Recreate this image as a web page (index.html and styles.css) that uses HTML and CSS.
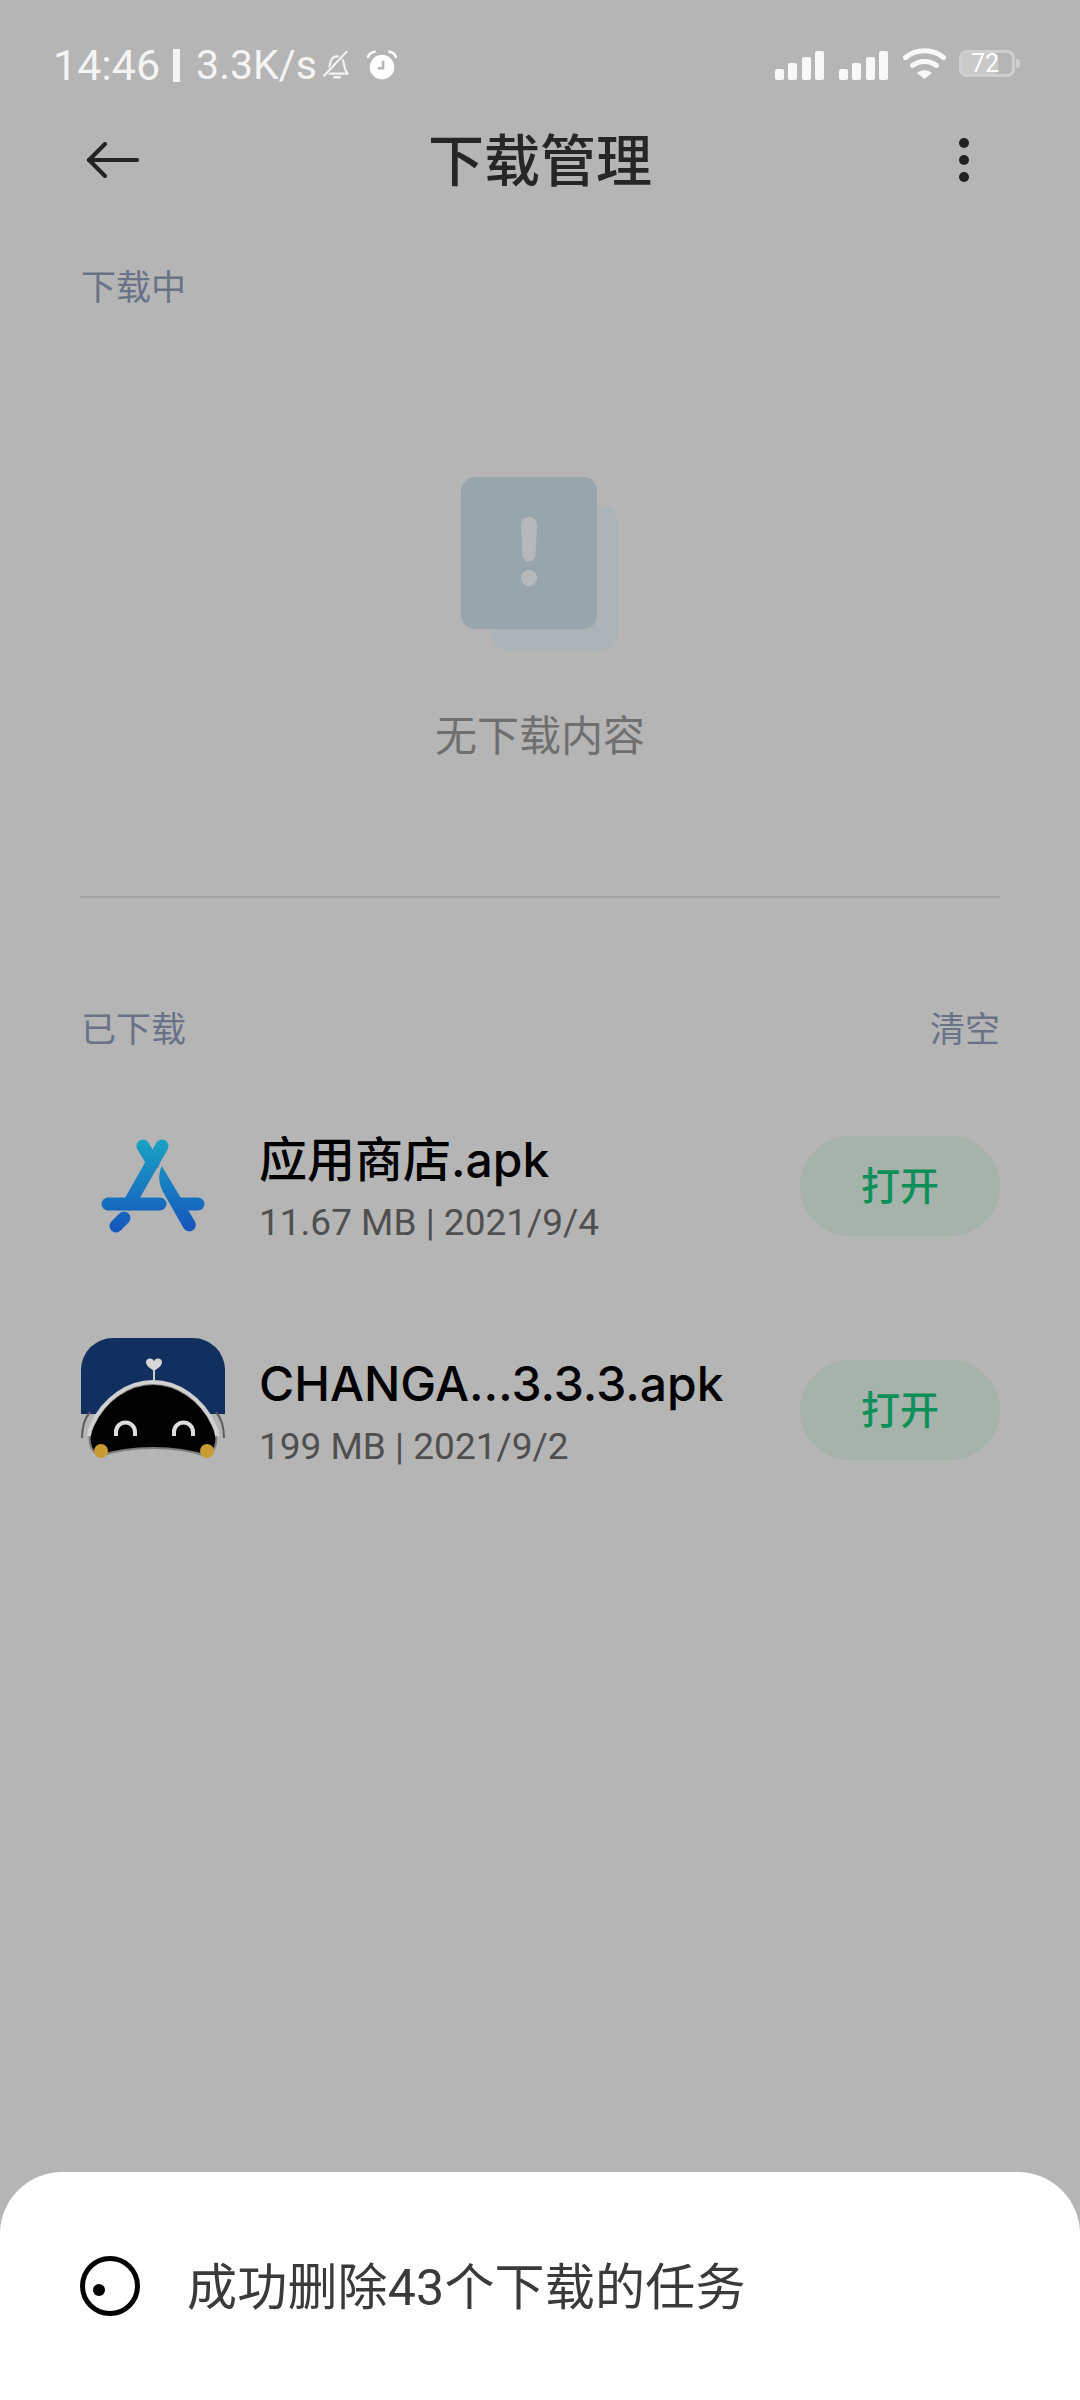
FILE: index.html
```html
<!DOCTYPE html>
<html lang="zh-CN">
<head>
    <meta charset="UTF-8">
    <meta name="viewport" content="width=device-width, initial-scale=1.0">
    <title>下载管理</title>
    <link rel="stylesheet" href="styles.css">
</head>
<body>
    <!-- Status bar -->
    <div class="status-bar">
        <div class="status-left">
            <span class="status-time">14:46</span>
            <span class="status-sep"></span>
            <span class="status-speed">3.3K/s</span>
            <svg class="icon-bell" viewBox="0 0 28 28" fill="none" stroke="#f4f4f4" stroke-width="2" stroke-linecap="round" stroke-linejoin="round">
                <path d="M4 22h20c-2.500-2.500-3-5-3.500-9-.5-4-3-7-6.500-7s-6 3-6.500 7c-.5 4-1 6.500-3.500 9z"/>
                <path d="M11.500 25.500h5" stroke-width="2.400"/>
                <path d="M23 1.500L2 24" stroke="#b5b5b5" stroke-width="4"/>
                <path d="M23 1.500L2 24"/>
            </svg>
            <svg class="icon-alarm" viewBox="0 0 30 28">
                <circle cx="15" cy="16" r="11.500" fill="#fff"/>
                <path d="M2 6.500C3 3.500 5 2 8 1.500M28 6.500C27 3.500 25 2 22 1.500" fill="none" stroke="#fff" stroke-width="2.400" stroke-linecap="round"/>
                <path d="M16 10v7h-5" fill="none" stroke="#b5b5b5" stroke-width="2.400"/>
            </svg>
        </div>
        <div class="status-right">
            <div class="signal"><i class="b1"></i><i class="b2"></i><i class="b3"></i><i class="b4"></i></div>
            <div class="signal"><i class="b1"></i><i class="b2"></i><i class="b3"></i><i class="b4"></i></div>
            <svg class="icon-wifi" viewBox="0 0 43 31" fill="none" stroke="#f8f8f8" stroke-linecap="round">
                <path d="M2.500 9.500C13 .5 30 .5 40.500 9.500" stroke-width="5"/>
                <path d="M9.500 17.500C16 12 27 12 33.500 17.500" stroke-width="5"/>
                <path d="M14 25c4-3.800 11-3.800 15 0l-7.500 6z" fill="#f8f8f8" stroke="none"/>
            </svg>
            <div class="battery">
                <div class="battery-fill"></div>
                <span class="battery-num">72</span>
            </div>
            <span class="battery-tip"></span>
        </div>
    </div>

    <!-- Header -->
    <div class="header">
        <svg class="icon-back" viewBox="0 0 53 36" fill="none" stroke="#222" stroke-width="4" stroke-linecap="round" stroke-linejoin="round">
            <path d="M51 18H3"/>
            <path d="M19 2L3 18l16 16"/>
        </svg>
        <h1 class="title">下载管理</h1>
        <div class="more"><i></i><i></i><i></i></div>
    </div>

    <!-- Downloading section -->
    <div class="section-label">下载中</div>
    <div class="empty">
        <svg class="empty-icon" viewBox="0 0 157 173">
            <rect x="30" y="29" width="127" height="144" rx="15" fill="#adb4b7"/>
            <rect x="0" y="0" width="136" height="152" rx="14" fill="#98a5ad"/>
            <path d="M60 48a8 8 0 0 1 16 0l-1.500 30a6.500 6.500 0 0 1-13 0z" fill="#b5b9bb"/>
            <circle cx="68" cy="101" r="8" fill="#b5b9bb"/>
        </svg>
        <div class="empty-text">无下载内容</div>
    </div>
    <div class="divider"></div>

    <!-- Finished section -->
    <div class="section-head">
        <div class="section-label">已下载</div>
        <div class="section-label">清空</div>
    </div>

    <div class="file-row first">
        <svg class="file-icon" viewBox="0 0 144 144">
            <defs>
                <linearGradient id="store" gradientUnits="userSpaceOnUse" x1="0" y1="25" x2="0" y2="117">
                    <stop offset="0" stop-color="#1aa3c4"/>
                    <stop offset="1" stop-color="#1655bd"/>
                </linearGradient>
            </defs>
            <g fill="none" stroke="url(#store)" stroke-width="13" stroke-linecap="round">
                <path d="M81 32L48 90"/>
                <path d="M62 32l10 17"/>
                <path d="M27 90h52"/>
                <path d="M99 90h18"/>
                <path d="M43 104l-8 8"/>
            </g>
            <path d="M80.700 52L114 107.500a6.600 6.600 0 0 1-11.500 6.500L85.500 84c-5.500-9-10.500-19-4.800-32z" fill="url(#store)"/>
        </svg>
        <div class="file-info">
            <div class="file-name">应用商店.apk</div>
            <div class="file-meta">11.67 MB | 2021/9/4</div>
        </div>
        <button class="open-btn">打开</button>
    </div>

    <div class="file-row">
        <svg class="file-icon" viewBox="0 0 144 144">
            <path d="M0 32A32 32 0 0 1 32 0h80a32 32 0 0 1 32 32v44H0z" fill="#12305f"/>
            <path d="M1 100C1 88 4 80 9 74M143 100c0-12-3-20-8-26" fill="none" stroke="#5c5c5c" stroke-width="2"/>
            <path d="M18 118C8 112 6 100 12 88 24 62 48 46 72 46s48 16 60 42c6 12 4 24-6 30-18-6-36-8-54-8s-36 2-54 8z" fill="#000" stroke="#7c7c7c" stroke-width="2"/>
            <path d="M8 98C8 94 9 91 11 87 23 60 48 44 72 44s49 16 61 43c2 4 3 7 3 11" fill="none" stroke="#d0d0d0" stroke-width="4"/>
            <path d="M35 98v-4a9.500 9.500 0 0 1 19 0v4M93 98v-4a9.500 9.500 0 0 1 19 0v4" fill="none" stroke="#ddd" stroke-width="4"/>
            <circle cx="20" cy="113" r="7" fill="#c99b34"/>
            <circle cx="126" cy="113" r="7" fill="#c99b34"/>
            <path d="M73 43V32" stroke="#ccc" stroke-width="2"/>
            <path d="M73 33c-6-4-8-6-8-9 0-4 6-5 8-1 2-4 8-3 8 1 0 3-2 5-8 9z" fill="#d6d6d6"/>
        </svg>
        <div class="file-info">
            <div class="file-name">CHANGA…3.3.3.apk</div>
            <div class="file-meta">199 MB | 2021/9/2</div>
        </div>
        <button class="open-btn">打开</button>
    </div>

    <!-- Toast -->
    <div class="toast">
        <svg class="toast-icon" viewBox="0 0 60 60" fill="none">
            <circle cx="30" cy="30" r="27.500" stroke="#000" stroke-width="5"/>
            <circle cx="19" cy="34" r="6" fill="#000"/>
        </svg>
        <span class="toast-text">成功删除43个下载的任务</span>
    </div>
</body>
</html>
```

FILE: styles.css
```css
* {
    box-sizing: border-box;
}

body {
    margin: 0;
    width: 1080px;
    height: 2400px;
    display: flex;
    flex-direction: column;
    overflow: hidden;
    background-color: #b5b5b5;
    font-family: Roboto, "Noto Sans CJK SC", sans-serif;
}

/* Status bar */
.status-bar {
    height: 100px;
    padding: 43px 60px 0 53px;
    display: flex;
    justify-content: space-between;
    align-items: flex-start;
}

.status-left {
    display: flex;
    align-items: center;
    height: 44px;
    color: #f4f4f4;
    font-size: 43px;
    line-height: 44px;
}

.status-sep {
    width: 7px;
    height: 33px;
    margin: 0 16px 0 13px;
    background-color: #f4f4f4;
}

.status-speed {
    font-size: 41px;
}

.icon-bell {
    width: 30px;
    height: 30px;
    margin-left: 5px;
}

.icon-alarm {
    width: 32px;
    height: 30px;
    margin-left: 14px;
}

.status-right {
    display: flex;
    align-items: flex-start;
    padding-top: 5px;
}

.signal {
    width: 49px;
    height: 29px;
    margin-top: 3px;
    margin-right: 15px;
    display: flex;
    align-items: flex-end;
    justify-content: space-between;
}

.signal i {
    width: 9px;
    background-color: #f8f8f8;
    border-radius: 2px;
}

.signal .b1 { height: 11px; }
.signal .b2 { height: 17px; }
.signal .b3 { height: 23px; }
.signal .b4 { height: 29px; }

.icon-wifi {
    width: 43px;
    height: 31px;
    margin-right: 13px;
}

.battery {
    position: relative;
    width: 56px;
    height: 27px;
    margin-top: 2px;
    border: 3px solid #cfcfcf;
    border-radius: 8px;
}

.battery-fill {
    width: 72%;
    height: 100%;
    margin: 0;
    background-color: #c9c9c9;
    border-radius: 4px;
}

.battery-num {
    position: absolute;
    top: -3px;
    left: 9px;
    color: #fff;
    font-size: 25px;
    line-height: 27px;
}

.battery-tip {
    width: 4px;
    height: 9px;
    margin: 11px 0 0 1px;
    background-color: #cfcfcf;
    border-radius: 0 3px 3px 0;
}

/* Header */
.header {
    height: 120px;
    padding: 0 86px;
    display: grid;
    grid-template-columns: 1fr auto 1fr;
    align-items: center;
}

.icon-back {
    width: 53px;
    height: 36px;
}

.title {
    margin: 4px 0 0;
    color: #262626;
    font-size: 56px;
    font-weight: 500;
    line-height: 70px;
}

.more {
    justify-self: end;
    margin-right: 25px;
    display: flex;
    flex-direction: column;
    gap: 7px;
}

.more i {
    width: 10px;
    height: 10px;
    background-color: #222;
    border-radius: 50%;
}

/* Sections */
.section-label {
    color: #6a7288;
    font-size: 35px;
    line-height: 50px;
}

body > .section-label {
    margin: 44px 0 0 81px;
}

.section-head {
    margin: 108px 80px 0 81px;
    display: flex;
    justify-content: space-between;
}

.empty {
    margin-top: 163px;
    display: flex;
    flex-direction: column;
    align-items: center;
}

.empty-icon {
    width: 157px;
    height: 173px;
    margin-right: 2px;
}

.empty-text {
    margin-top: 59px;
    color: #6f6f6f;
    font-size: 42px;
    line-height: 56px;
}

.divider {
    height: 2px;
    margin: 131px 80px 0;
    background-color: #a4a4a4;
}

/* File list */
.file-row {
    height: 144px;
    margin: 80px 80px 0 81px;
    display: flex;
    align-items: center;
}

.file-row.first {
    margin-top: 58px;
}

.file-icon {
    width: 144px;
    height: 144px;
    flex: none;
}

.file-info {
    margin-left: 34px;
    padding-top: 6px;
    flex: 1;
}

.file-name {
    color: #000;
    font-family: Inter, "Noto Sans CJK SC", sans-serif;
    font-size: 48px;
    font-weight: 500;
    line-height: 60px;
}

.file-meta {
    margin-top: 8px;
    color: #4f4f4f;
    font-size: 37px;
    line-height: 50px;
}

.open-btn {
    width: 200px;
    height: 100px;
    padding: 0 0 6px;
    border: none;
    border-radius: 50px;
    background-color: #a5b3ab;
    color: #0f8f5a;
    font-family: inherit;
    font-size: 39px;
    font-weight: 500;
}

/* Toast */
.toast {
    height: 228px;
    margin-top: auto;
    padding: 0 80px;
    display: flex;
    align-items: center;
    gap: 47px;
    background-color: #fff;
    border-radius: 62px 62px 0 0;
}

.toast-icon {
    width: 60px;
    height: 60px;
}

.toast-text {
    padding-bottom: 6px;
    color: #3a3a3a;
    font-size: 50px;
    letter-spacing: .2px;
}
```
